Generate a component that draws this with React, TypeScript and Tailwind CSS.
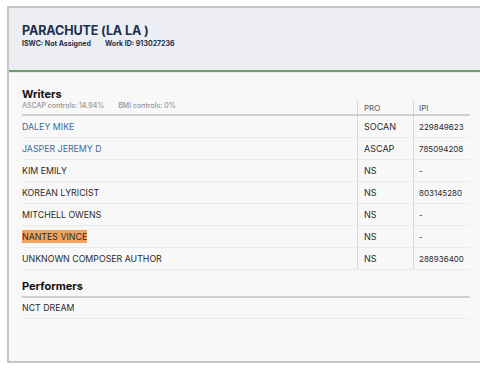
import React from "react";

const writers: { name: string; pro: string; ipi: string; link?: boolean; hl?: boolean }[] = [
  { name: "DALEY MIKE", pro: "SOCAN", ipi: "229849623", link: true },
  { name: "JASPER JEREMY D", pro: "ASCAP", ipi: "785094208", link: true },
  { name: "KIM EMILY", pro: "NS", ipi: "-" },
  { name: "KOREAN LYRICIST", pro: "NS", ipi: "803145280" },
  { name: "MITCHELL OWENS", pro: "NS", ipi: "-" },
  { name: "NANTES VINCE", pro: "NS", ipi: "-", hl: true },
  { name: "UNKNOWN COMPOSER AUTHOR", pro: "NS", ipi: "288936400" },
];

export default function App() {
  return (
    <div
      className="w-[480px] h-[371px] bg-white pt-[6px] pl-[7px] overflow-hidden"
      style={{ fontFamily: "Inter, 'Liberation Sans', sans-serif" }}
    >
      <div className="w-[520px] h-[357px] border-l-2 border-t-2 border-b-2 border-[#c6c6c6] bg-[#f8f8f8]">
        <div className="h-[64px] bg-[#eceef3] border-b-[2px] border-[#6a9f6a] pl-[13px] pt-[15px] shadow-[0_1px_0_#dff0df]">
          <div className="text-[12.5px] leading-[16px] font-bold text-[#1c2f4f] tracking-[-0.1px]">PARACHUTE (LA LA )</div>
          <div className="flex gap-[14px] text-[7px] leading-[9px] font-bold text-[#1c2f4f]">
            <span>ISWC: Not Assigned</span>
            <span>Work ID: 913027236</span>
          </div>
        </div>
        <div className="pl-[13px] pt-[15px]">
          <div className="text-[11px] leading-[14px] font-bold text-[#111]">Writers</div>
          <div className="w-[448px]">
            <div className="flex h-[15px] border-b-2 border-[#cfcfcf] items-center">
              <div className="flex-1 flex gap-[14px] text-[7px] text-[#959595] font-medium pb-[2px]">
                <span>ASCAP controls: 14.94%</span>
                <span>BMI controls: 0%</span>
              </div>
              <div className="w-[56px] h-full border-l border-[#d6d6d6] pl-[6px] text-[8px] text-[#555] flex items-center">PRO</div>
              <div className="w-[57px] h-full border-l border-[#d6d6d6] pl-[5px] text-[8px] text-[#555] flex items-center">IPI</div>
            </div>
            {writers.map((w) => (
              <div key={w.name} className="flex h-[22px] border-b border-[#ebebeb] items-center">
                <div className="flex-1 text-[8.8px]">
                  <span
                    className={
                      (w.link ? "text-[#3d6c9c] " : "text-[#2a2a2a] ") +
                      (w.hl ? "bg-[#f2a45e] py-[1px]" : "")
                    }
                  >
                    {w.name}
                  </span>
                </div>
                <div className="w-[56px] h-full border-l border-[#d6d6d6] pl-[6px] text-[9px] text-[#2a2a2a] flex items-center">{w.pro}</div>
                <div className="w-[57px] h-full border-l border-[#d6d6d6] pl-[5px] text-[8px] text-[#2a2a2a] flex items-center">{w.ipi}</div>
              </div>
            ))}
            <div className="text-[11px] leading-[14px] font-bold text-[#111] mt-[9px] pb-[3px] border-b-2 border-[#cfcfcf]">Performers</div>
            <div className="h-[21px] flex items-center text-[8.8px] text-[#2a2a2a] border-b border-[#ebebeb]">NCT DREAM</div>
          </div>
        </div>
      </div>
    </div>
  );
}
